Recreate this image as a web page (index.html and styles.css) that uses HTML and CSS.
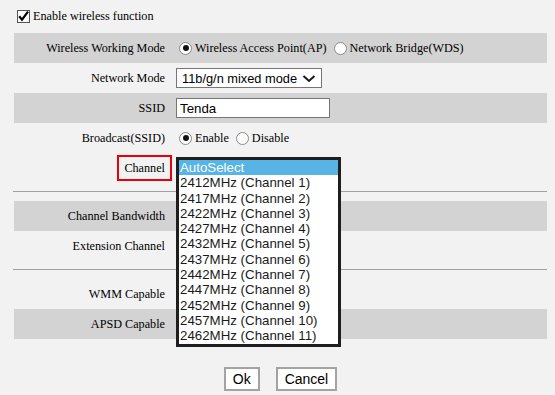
FILE: index.html
```html
<!DOCTYPE html>
<html>
<head>
<meta charset="utf-8">
<link rel="stylesheet" href="styles.css">
</head>
<body>
<div class="top">
  <label class="check"><span class="box"><svg width="13" height="13" viewBox="0 0 13 13"><path d="M2.2 6.2 L5 9.6 L11 1.6" fill="none" stroke="#000" stroke-width="2.2"/></svg></span>Enable wireless function</label>
</div>
<div class="form">
  <div class="row shade">
    <div class="lbl"><span>Wireless Working Mode</span></div>
    <div class="ctl">
      <label class="opt"><span class="radio on"></span>Wireless Access Point(AP)</label>
      <label class="opt"><span class="radio"></span>Network Bridge(WDS)</label>
    </div>
  </div>
  <div class="row">
    <div class="lbl"><span>Network Mode</span></div>
    <div class="ctl">
      <div class="select"><span>11b/g/n mixed mode</span><svg width="14" height="9" viewBox="0 0 14 9"><path d="M1.5 2 L7 7 L12.5 2" fill="none" stroke="#1a1a1a" stroke-width="2"/></svg></div>
    </div>
  </div>
  <div class="row shade">
    <div class="lbl"><span>SSID</span></div>
    <div class="ctl"><input class="text" type="text" value="Tenda"></div>
  </div>
  <div class="row">
    <div class="lbl"><span>Broadcast(SSID)</span></div>
    <div class="ctl">
      <label class="opt"><span class="radio on"></span>Enable</label>
      <label class="opt"><span class="radio"></span>Disable</label>
    </div>
  </div>
  <div class="row">
    <div class="lbl"><span class="mark">Channel</span></div>
    <div class="ctl">
      <ul class="list">
        <li class="sel">AutoSelect</li>
        <li>2412MHz (Channel 1)</li>
        <li>2417MHz (Channel 2)</li>
        <li>2422MHz (Channel 3)</li>
        <li>2427MHz (Channel 4)</li>
        <li>2432MHz (Channel 5)</li>
        <li>2437MHz (Channel 6)</li>
        <li>2442MHz (Channel 7)</li>
        <li>2447MHz (Channel 8)</li>
        <li>2452MHz (Channel 9)</li>
        <li>2457MHz (Channel 10)</li>
        <li>2462MHz (Channel 11)</li>
      </ul>
    </div>
  </div>
  <hr class="sep">
  <div class="row shade">
    <div class="lbl"><span>Channel Bandwidth</span></div>
    <div class="ctl"></div>
  </div>
  <div class="row">
    <div class="lbl"><span>Extension Channel</span></div>
    <div class="ctl"></div>
  </div>
  <hr class="sep">
  <div class="row">
    <div class="lbl"><span>WMM Capable</span></div>
    <div class="ctl"></div>
  </div>
  <div class="row shade">
    <div class="lbl"><span>APSD Capable</span></div>
    <div class="ctl"></div>
  </div>
</div>
<div class="actions">
  <button class="btn" type="button">Ok</button>
  <button class="btn" type="button">Cancel</button>
</div>
</body>
</html>
```
FILE: styles.css
```css
body {
  margin: 0;
  background: #f2f2f2;
  font: 12.2px "Liberation Serif", "Times New Roman", serif;
  color: #000;
}

.top {
  height: 33px;
  box-sizing: border-box;
  padding: 10px 0 0 17px;
}

.check {
  display: flex;
  align-items: center;
  gap: 3px;
  height: 13px;
}

.box {
  width: 13px;
  height: 13px;
  box-sizing: border-box;
  border: 1px solid #555;
  background: #fff;
  display: flex;
  align-items: center;
  justify-content: center;
}

.box svg {
  flex: none;
  overflow: visible;
}

.form {
  margin: 0 8px 0 14px;
}

.row {
  display: flex;
  height: 30px;
  align-items: center;
}

.shade {
  background: #d3d3d3;
}

.lbl {
  width: 162px;
  flex: none;
  box-sizing: border-box;
  padding-right: 4px;
  text-align: right;
}

.lbl span {
  display: inline-block;
  border: 2px solid transparent;
  padding: 0 5px;
  line-height: 22px;
}

.lbl span.mark {
  border-color: #e8000b;
}

.ctl {
  flex: 1;
  height: 100%;
  display: flex;
  align-items: center;
  position: relative;
}

.opt {
  display: flex;
  align-items: center;
  gap: 3px;
  margin-left: 3px;
}

.opt + .opt {
  margin-left: 7px;
}

.radio {
  width: 13px;
  height: 13px;
  box-sizing: border-box;
  border-radius: 50%;
  border: 1px solid #8a8a8a;
  background: #fff;
  position: relative;
}

.radio.on::after {
  content: "";
  position: absolute;
  inset: 2.5px;
  border-radius: 50%;
  background: #111;
}

.select {
  width: 146px;
  height: 20px;
  box-sizing: border-box;
  border: 1px solid #767676;
  background: #fff;
  display: flex;
  align-items: center;
  justify-content: space-between;
  padding: 0 5px 0 5px;
  font: 12.8px "Liberation Sans", Arial, sans-serif;
  color: #000;
}

.text {
  width: 154px;
  height: 20px;
  box-sizing: border-box;
  border: 1px solid #767676;
  background: #fff;
  padding: 0 3px;
  margin: 0;
  font: 13.3px "Liberation Sans", Arial, sans-serif;
  color: #000;
}

.list {
  position: absolute;
  top: 4px;
  left: 0;
  z-index: 2;
  width: 165px;
  box-sizing: border-box;
  margin: 0;
  padding: 0;
  list-style: none;
  border: 3px solid #1e1e1e;
  background: #fff;
  font: 13.3px "Liberation Sans", Arial, sans-serif;
  line-height: 15.3px;
  color: #1a1a1a;
}

.list li {
  padding-left: 1px;
  white-space: nowrap;
}

.list li.sel {
  background: #58b4e4;
  color: #fff;
}

.sep {
  border: 0;
  border-top: 1px solid #a0a0a0;
  height: 0;
  margin: 8px 0 9px -1px;
}

.actions {
  display: flex;
  justify-content: center;
  gap: 16px;
  margin-top: 28px;
  padding-left: 6px;
}

.btn {
  height: 24px;
  box-sizing: border-box;
  border: 2px solid #a3a3a3;
  background: #fff;
  padding: 0 7px;
  margin: 0;
  font: 14px "Liberation Sans", Arial, sans-serif;
  color: #000;
}
```
